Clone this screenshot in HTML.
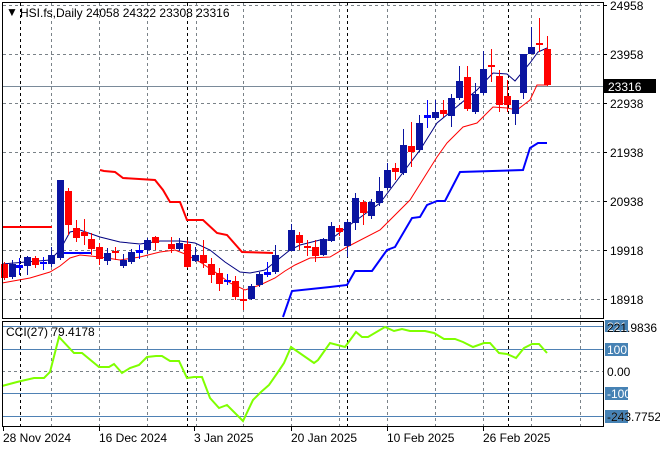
<!DOCTYPE html>
<html><head><meta charset="utf-8"><style>
html,body{margin:0;padding:0;background:#fff;}
body{width:660px;height:450px;overflow:hidden;font-family:"Liberation Sans",sans-serif;}
svg text{font-family:"Liberation Sans",sans-serif;font-size:12px;fill:#000;}
</style></head><body>
<svg width="660" height="450" xmlns="http://www.w3.org/2000/svg" id="s">
<rect width="660" height="450" fill="#fff"/>
<g id="grid" stroke="#7a8288" stroke-width="1" stroke-dasharray="3,3" fill="none"></g>
<!-- main panel -->
<line x1="2" y1="86.5" x2="603" y2="86.5" stroke="#7a8a99" stroke-width="1"/>
<polyline fill="none" stroke="#ff0000" stroke-width="2" points="2,227 52,227"/>
<polyline fill="none" stroke="#ff0000" stroke-width="2" points="100,170 104,171 115,172 123,178 155,180 163,190 170,202 180,202 187,220 203,220 217,233 227,235 242,252 273,253"/>
<polyline fill="none" stroke="#0000ff" stroke-width="2" points="60,253 91,253"/>
<polyline fill="none" stroke="#0000ff" stroke-width="2" points="283,317 292,291 330,287 347,285 355,271 372,271 387,250 395,247 412,218 420,217 427,205 437,201 445,201 460,172 523,170 530,148 538,143 547,143"/>
<polyline fill="none" stroke="#ff0000" stroke-width="1" points="2,283 30,278 50,272 60,266 70,258 80,255 100,257 120,260 140,257 160,252 175,250 185,254 200,262 215,272 230,283 245,290 260,285 275,278 285,271 295,265 310,258 330,257 347,247 380,230 410,200 437,157 447,143 463,127 477,123 493,107 507,108 517,110 530,100 537,85 547,85"/>
<polyline fill="none" stroke="#000080" stroke-width="1" points="2,264 50,260 60,250 70,232 80,230 100,237 120,242 140,244 160,241 180,241 195,243 210,250 225,262 240,272 250,273 265,270 280,258 290,250 300,245 320,240 330,240 347,227 380,203 420,150 437,123 477,90 493,73 507,74 515,81 530,63 538,52 547,48"/>
<g id="candles"></g>
<rect x="2.5" y="2.5" width="601" height="316" fill="none" stroke="#000"/>
<text x="6" y="16" font-size="10">▼</text>
<text x="20" y="17">HSI.fs,Daily  24058 24322 23308 23316</text>
<g id="axis"></g>
<rect x="604" y="79" width="52" height="14" fill="#000"/>
<text x="608" y="91" style="fill:#fff">23316</text>
<!-- CCI panel -->
<g stroke="#4f81b4" stroke-width="1">
<line x1="2" y1="326.5" x2="603" y2="326.5"/>
<line x1="2" y1="349.5" x2="603" y2="349.5"/>
<line x1="2" y1="393.5" x2="603" y2="393.5"/>
<line x1="2" y1="416.5" x2="603" y2="416.5"/>
</g>
<line x1="2" y1="371.5" x2="603" y2="371.5" stroke="#7a8288" stroke-dasharray="3,3"/>
<polyline fill="none" stroke="#7fff00" stroke-width="2" points="2,386 17,382 34,378 44,378 50,372 59,337 74,353 82,353 99,367 109,367 114,364 122,373 130,368 139,365 147,357 156,356 162,356 170,361 179,361 187,378 194,377 202,377 210,398 219,408 227,405 243,421 253,400 261,392 269,385 278,372 284,363 291,347 314,363 318,360 330,343 345,347 356,332 362,337 368,337 385,327 394,331 402,329 410,331 425,331 434,333 444,339 455,339 463,342 473,347 484,343 490,343 499,353 507,354 516,358 524,348 532,344 539,344 547,353"/>
<rect x="2.5" y="321.5" width="601" height="105" fill="none" stroke="#000"/>
<text x="6" y="336">CCI(27) 79.4178</text>
<rect x="605" y="320" width="23" height="12" fill="#4682b4"/>
<text x="607" y="331" style="fill:#fff">221</text>
<text x="607" y="332">221.9836</text>
<rect x="605" y="343" width="23" height="13" fill="#4682b4"/>
<text x="607" y="354" style="fill:#fff">100</text>
<text x="607" y="376">0.00</text>
<rect x="605" y="387" width="23" height="13" fill="#4682b4"/>
<text x="607" y="398" style="fill:#fff">-100</text>
<rect x="605" y="410" width="23" height="13" fill="#4682b4"/>
<text x="607" y="421" style="fill:#fff">-243</text>
<text x="607" y="421">-243.7752</text>
<g id="dates"></g>
</svg>
<script>
var ns="http://www.w3.org/2000/svg";
function el(p,t,a){var e=document.createElementNS(ns,t);for(var k in a)e.setAttribute(k,a[k]);p.appendChild(e);return e;}
var g=document.getElementById('grid');
var vx=[20,51,99,147,187,196,243,291,339,347,387,435,483,508,531,580];
var blk=[20,187,347,508];
vx.forEach(function(x){var b=blk.indexOf(x)>=0;
 el(g,'line',{x1:x+.5,y1:3,x2:x+.5,y2:318,stroke:b?'#000':'#7a8288'});
 el(g,'line',{x1:x+.5,y1:322,x2:x+.5,y2:426,stroke:b?'#000':'#7a8288'});});
[5,54,103,152,201,250,299].forEach(function(y){el(g,'line',{x1:3,y1:y+.5,x2:603,y2:y+.5});});
var ax=document.getElementById('axis');
[["24958",5],["23958",54],["22938",103],["21938",152],["20938",201],["19918",250],["18918",299]].forEach(function(a){
 el(ax,'line',{x1:603,y1:a[1]+.5,x2:607,y2:a[1]+.5,stroke:'#000'});
 var t=el(ax,'text',{x:610,y:a[1]+5});t.textContent=a[0];});
var C=[[4,'r',264,278,262,280],[12,'b',264,277,260,279],[19,'b',265,268,258,275],[27,'b',257,266,256,275],[35,'r',258,265,256,268],[43,'b',262,264,257,270],[51,'b',255,264,247,267],[60,'b',180,258,180,260],[68,'r',191,225,188,235],[76,'r',228,238,220,242],[84,'r',232,236,219,245],[91,'r',239,249,233,255],[99,'r',247,259,243,265],[107,'b',253,261,248,265],[115,'r',251,253,247,260],[123,'b',260,266,254,268],[131,'b',252,262,249,264],[139,'b',250,253,245,259],[147,'b',240,250,238,254],[155,'r',237,243,236,250],[171,'r',244,249,237,253],[179,'b',243,249,238,251],[187,'r',244,267,240,268],[195,'b',255,261,247,262],[203,'r',255,263,240,268],[211,'r',264,275,258,283],[219,'r',273,284,268,291],[227,'b',280,282,274,285],[235,'r',281,297,276,300],[243,'r',299,300,290,310],[251,'b',286,299,284,300],[259,'b',274,285,272,287],[267,'b',272,275,262,277],[275,'b',255,272,245,274],[291,'b',230,251,224,251],[299,'r',235,243,232,250],[307,'r',246,248,240,256],[315,'r',247,256,240,262],[323,'b',239,255,238,256],[331,'b',226,241,222,242],[339,'r',228,232,225,236],[347,'b',222,246,220,257],[355,'b',198,223,193,230],[363,'r',202,213,200,225],[371,'b',202,216,199,219],[379,'b',191,203,177,206],[387,'b',170,188,163,190],[395,'r',168,172,163,180],[403,'b',145,173,129,175],[411,'r',146,152,122,167],[419,'b',123,150,115,152],[427,'b',115,118,100,128],[435,'b',112,118,100,120],[443,'r',110,114,100,117],[451,'b',98,116,94,127],[459,'b',81,98,66,100],[467,'r',77,109,66,111],[475,'b',94,112,83,114],[483,'b',69,93,51,95],[491,'r',65,67,49,82],[499,'r',76,105,70,112],[507,'r',96,105,80,112],[515,'b',100,114,100,125],[523,'b',54,93,54,99],[531,'b',47,54,27,54],[539,'r',43,45,18,52],[547,'r',49,85,36,86]];
var cg=document.getElementById('candles');
C.forEach(function(c){var col=c[1]=='r'?'#ff0000':'#0a14a0';if(c[1]=='b'&&c[3]-c[2]<5)col='#0000ff';
 el(cg,'rect',{x:c[0],y:c[4],width:1,height:c[5]-c[4],fill:col});
 el(cg,'rect',{x:c[0]-3,y:c[2],width:7,height:Math.max(2,c[3]-c[2]),fill:col});});
var dg=document.getElementById('dates');
[["28 Nov 2024",3],["16 Dec 2024",99],["3 Jan 2025",194],["20 Jan 2025",291],["10 Feb 2025",387],["26 Feb 2025",483]].forEach(function(d){
 el(dg,'line',{x1:d[1]+.5,y1:426,x2:d[1]+.5,y2:431,stroke:'#000'});
 var t=el(dg,'text',{x:d[1],y:442});t.textContent=d[0];});
</script>
</body></html>
